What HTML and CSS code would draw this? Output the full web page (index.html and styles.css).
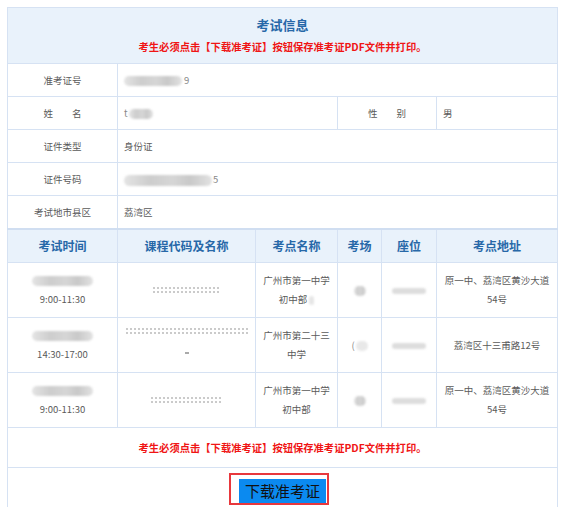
FILE: index.html
```html
<!DOCTYPE html>
<html lang="zh-CN">
<head>
<meta charset="utf-8">
<title>考试信息</title>
<link rel="stylesheet" href="styles.css">
</head>
<body>
<div class="clip">
<table class="info">
  <colgroup>
    <col class="c1"><col class="c2"><col class="c3"><col class="c4"><col class="c5"><col class="c6">
  </colgroup>
  <tr class="title-row">
    <th colspan="6">
      <div class="title">考试信息</div>
      <div class="warn">考生必须点击【下载准考证】按钮保存准考证PDF文件并打印。</div>
    </th>
  </tr>
  <tr class="row">
    <td class="label">准考证号</td>
    <td class="value" colspan="5"><span class="blur b-id"></span><span class="ghost">9</span></td>
  </tr>
  <tr class="row">
    <td class="label">姓　　名</td>
    <td class="value" colspan="2"><span class="ghost">t</span><span class="blur b-name"></span></td>
    <td class="label" colspan="2">性　　别</td>
    <td class="value">男</td>
  </tr>
  <tr class="row">
    <td class="label">证件类型</td>
    <td class="value" colspan="5">身份证</td>
  </tr>
  <tr class="row">
    <td class="label">证件号码</td>
    <td class="value" colspan="5"><span class="blur b-card"></span><span class="ghost">5</span></td>
  </tr>
  <tr class="row">
    <td class="label">考试地市县区</td>
    <td class="value" colspan="5">荔湾区</td>
  </tr>
  <tr class="head-row">
    <th>考试时间</th>
    <th>课程代码及名称</th>
    <th>考点名称</th>
    <th>考场</th>
    <th>座位</th>
    <th>考点地址</th>
  </tr>
  <tr class="data">
    <td><div class="line"><span class="blur b-date"></span></div><div class="line">9:00-11:30</div></td>
    <td><div class="course"><div class="dots d-short"></div><div class="dots d-short"></div></div></td>
    <td><div class="line">广州市第一中学</div><div class="line">初中部<span class="blur b-tiny"></span></div></td>
    <td><span class="blur b-room"></span></td>
    <td><span class="blur b-seat"></span></td>
    <td><div class="line">原一中、荔湾区黄沙大道</div><div class="line">54号</div></td>
  </tr>
  <tr class="data">
    <td><div class="line"><span class="blur b-date"></span></div><div class="line">14:30-17:00</div></td>
    <td><div class="course tall"><div class="dots d-long"></div><div class="dots d-long"></div><div class="mark"></div></div></td>
    <td><div class="line">广州市第二十三</div><div class="line">中学</div></td>
    <td><span class="ghost">(</span><span class="blur b-room2"></span></td>
    <td><span class="blur b-seat"></span></td>
    <td><div class="line">荔湾区十三甫路12号</div></td>
  </tr>
  <tr class="data">
    <td><div class="line"><span class="blur b-date"></span></div><div class="line">9:00-11:30</div></td>
    <td><div class="course"><div class="dots d-mid"></div><div class="dots d-mid"></div></div></td>
    <td><div class="line">广州市第一中学</div><div class="line">初中部</div></td>
    <td><span class="blur b-room"></span></td>
    <td><span class="blur b-seat"></span></td>
    <td><div class="line">原一中、荔湾区黄沙大道</div><div class="line">54号</div></td>
  </tr>
  <tr class="note-row">
    <td colspan="6"><span class="warn">考生必须点击【下载准考证】按钮保存准考证PDF文件并打印。</span></td>
  </tr>
  <tr class="btn-row">
    <td colspan="6">
      <span class="btn-frame"><span class="btn">下载准考证</span></span>
    </td>
  </tr>
</table>
</div>
</body>
</html>
```

FILE: styles.css
```css
html, body {
  margin: 0;
  padding: 0;
  background: #ffffff;
}
body {
  padding: 7px 0 0 7px;
  font-family: "Noto Sans CJK SC", "Noto Sans", sans-serif;
  color: #5a5a5a;
}
.clip {
  width: 560px;
  height: 500px;
  overflow: hidden;
}
.info {
  width: 550px;
  border-collapse: collapse;
  table-layout: fixed;
}
.c1 { width: 110px; }
.c2 { width: 138px; }
.c3 { width: 82px; }
.c4 { width: 44px; }
.c5 { width: 55px; }
.c6 { width: 121px; }
.info th, .info td {
  border: 1px solid #d6e2f3;
  padding: 0;
  font-size: 9.5px;
  line-height: 14px;
  font-weight: normal;
  vertical-align: middle;
}
.title-row th {
  height: 55px;
  background: #e9f2fb;
  text-align: center;
  vertical-align: top;
}
.title {
  margin-top: 8px;
  font-size: 13px;
  line-height: 18px;
  font-weight: bold;
  color: #2768a8;
}
.warn {
  display: block;
  margin-top: 6px;
  font-size: 10.3px;
  line-height: 14px;
  font-weight: bold;
  color: #f01515;
}
.row td { height: 32px; }
.label {
  text-align: center;
}
.value {
  text-align: left;
  padding-left: 6px !important;
}
.head-row th {
  height: 32px;
  background: #e9f2fb;
  font-size: 12px;
  line-height: 16px;
  font-weight: bold;
  color: #2768a8;
  text-align: center;
  border-top: 2px solid #d0def1;
}
.data td {
  height: 54px;
  text-align: center;
}
.line { line-height: 19px; height: 19px; overflow: hidden; white-space: nowrap; }
.blur {
  display: inline-block;
  vertical-align: middle;
  border-radius: 6px;
  background: linear-gradient(90deg, #e4e4e4 0%, #cdcdcd 30%, #d6d6d6 55%, #c9c9c9 75%, #e2e2e2 100%);
  filter: blur(1.2px);
}
.ghost { color: #888; }
.b-id { width: 58px; height: 10px; margin-right: 2px; }
.b-name { width: 24px; height: 10px; margin-left: 1px; }
.b-card { width: 88px; height: 11px; margin-right: 1px; }
.b-date { width: 61px; height: 10px; }
.b-tiny { width: 5px; height: 9px; margin-left: 2px; background: #e6e6e6; }
.b-room { width: 12px; height: 10px; }
.b-room2 { width: 12px; height: 10px; background: #e8e8e8; margin-left: 1px; }
.b-seat { width: 34px; height: 6px; background: #dddddd; }
.course {
  height: 10px;
  overflow: hidden;
}
.course.tall {
  height: 38px;
}
.dots {
  height: 2px;
  margin: 2px auto 2px;
  background: repeating-linear-gradient(90deg, #a8a8a8 0 2px, transparent 2px 4px);
  opacity: 0.6;
}
.d-short { width: 68px; }
.d-mid { width: 72px; }
.d-long { width: 122px; }
.mark {
  width: 4px;
  height: 2px;
  margin: 18px auto 0;
  background: #aaa;
}
.note-row td {
  height: 39px;
  text-align: center;
}
.note-row .warn { margin-top: 0; }
.btn-row td {
  height: 60px;
  text-align: center;
  vertical-align: top;
  padding: 5px 7px 0 0;
}
.btn-frame {
  display: inline-block;
  border: 2px solid #e8383d;
  padding: 4px 1px 0 8px;
  line-height: 0;
}
.btn {
  display: inline-block;
  background: #0b8af0;
  color: #111;
  font-size: 15px;
  line-height: 24px;
  height: 24px;
  padding: 0 6px;
}
```
